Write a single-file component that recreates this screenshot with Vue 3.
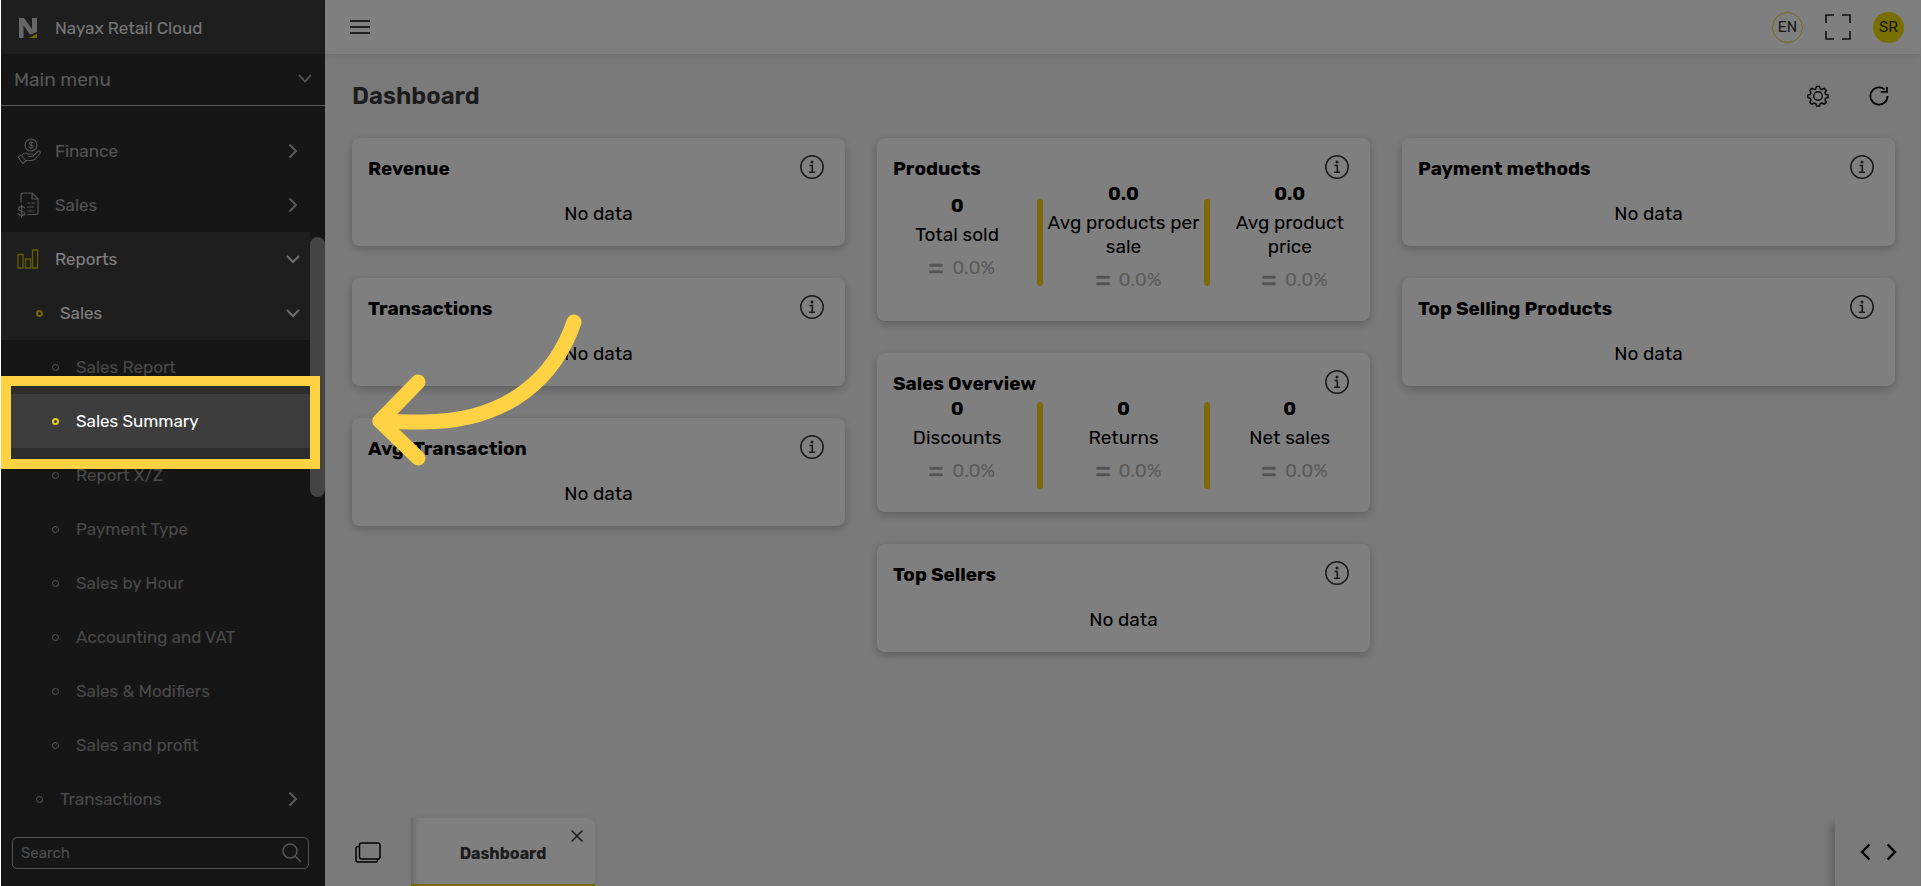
<script setup>
import { ref } from 'vue'

const search = ref('')

const menu = [
  { label: 'Finance', level: 0, icon: 'finance', arrow: 'right' },
  { label: 'Sales', level: 0, icon: 'sales', arrow: 'right' },
  { label: 'Reports', level: 0, icon: 'reports', arrow: 'down', active: true },
  { label: 'Sales', level: 1, arrow: 'down', active: true },
  { label: 'Sales Report', level: 2 },
  { label: 'Sales Summary', level: 2, active: true },
  { label: 'Report X/Z', level: 2 },
  { label: 'Payment Type', level: 2 },
  { label: 'Sales by Hour', level: 2 },
  { label: 'Accounting and VAT', level: 2 },
  { label: 'Sales & Modifiers', level: 2 },
  { label: 'Sales and profit', level: 2 },
  { label: 'Transactions', level: 1, arrow: 'right' },
]

const columns = [
  [{ title: 'Revenue' }, { title: 'Transactions' }, { title: 'Avg. Transaction' }],
  [
    {
      title: 'Products',
      stats: [
        { value: '0', label: 'Total sold', change: '0.0%' },
        { value: '0.0', label: 'Avg products per sale', change: '0.0%' },
        { value: '0.0', label: 'Avg product price', change: '0.0%' },
      ],
    },
    {
      title: 'Sales Overview',
      stats: [
        { value: '0', label: 'Discounts', change: '0.0%' },
        { value: '0', label: 'Returns', change: '0.0%' },
        { value: '0', label: 'Net sales', change: '0.0%' },
      ],
    },
    { title: 'Top Sellers' },
  ],
  [{ title: 'Payment methods' }, { title: 'Top Selling Products' }],
]
</script>

<template>
  <div class="app">
    <aside class="sidebar">
      <div class="brand">
        <svg class="logo" width="20" height="22" viewBox="0 0 20 22" aria-hidden="true">
          <path d="M1 1h5l8 11V1h5v14l-7 2.500L5.500 8.500V21H1z" fill="#cfcfcf" />
          <path d="M11 21 19 16.500V21z" fill="#e8c400" />
        </svg>
        <span>Nayax Retail Cloud</span>
      </div>
      <button class="main-menu" type="button">
        <span>Main menu</span>
        <svg width="14" height="12" viewBox="0 0 14 12" aria-hidden="true">
          <path d="M1 1l6 6.500 6-6.500" fill="none" stroke="currentColor" stroke-width="1.800" />
        </svg>
      </button>

      <div class="menu-area">
        <nav class="menu">
          <component
            :is="item.arrow ? 'button' : 'a'"
            v-for="(item, i) in menu"
            :key="i"
            :type="item.arrow ? 'button' : null"
            :href="item.arrow ? null : '#'"
            class="row"
            :class="['level-' + item.level, { active: item.active }]"
          >
            <span class="mark">
              <svg v-if="item.icon === 'finance'" width="24" height="26" viewBox="0 0 24 26" fill="none" stroke="currentColor" stroke-width="1.100" stroke-linejoin="round" stroke-linecap="round">
                <circle cx="14" cy="7" r="6" />
                <path d="M16 5c-.5-1-3.800-1.200-3.800.5 0 2 3.800 1 3.800 3 0 1.700-3.300 1.500-4 .3M14 3v8" />
                <path d="M4.500 17.500c2-2.500 4.500-3 6.500-1.500h4c2 0 2 2.500 0 2.500h-3.500M16.500 17.500l4.500-4c1.500-1 3 .5 2 2l-5.500 6c-1 1-2 1-3.500 1H9.500l-1.500 1M1 19l3-2 5 6-3.200 2.500z" />
              </svg>
              <svg v-else-if="item.icon === 'sales'" width="24" height="26" viewBox="0 0 24 26" fill="none" stroke="currentColor" stroke-width="1.200" stroke-linejoin="round" stroke-linecap="round">
                <path d="M4 10V3.500C4 2 5 1 6.500 1H15l6 6v13c0 1.500-1 2.500-2.500 2.500H11M15 1v6h6" />
                <path d="M11 11h2M15 11h2.500M10.500 15H17M10.500 19H17" />
                <path d="M7.500 16c-.8-2-6-2-6 .8 0 3.200 6.300 1.700 6.300 4.600 0 2.800-5.800 2.600-6.600.2M4.600 13v12.500" />
              </svg>
              <svg v-else-if="item.icon === 'reports'" width="22" height="20" viewBox="0 0 22 20" fill="none" stroke="#cbb900" stroke-width="1.300">
                <path d="M1 5.500h5v13.500H1zM8.500 10h5v9h-5zM15.500 1h5v18h-5z" />
              </svg>
              <i v-else class="bullet"></i>
            </span>
            <span class="row-label">{{ item.label }}</span>
            <svg v-if="item.arrow" class="chevron" width="14" height="14" viewBox="0 0 14 14" fill="none" stroke="currentColor" stroke-width="2">
              <path v-if="item.arrow === 'right'" d="M3.500 .5l6.500 6.500-6.500 6.500" />
              <path v-else d="M1 4l6 6 6-6" />
            </svg>
          </component>
        </nav>
        <div class="scroll-track"><div class="scroll-thumb"></div></div>
      </div>

      <div class="search">
        <input v-model="search" type="text" placeholder="Search" aria-label="Search" />
        <svg width="20" height="20" viewBox="0 0 20 20" fill="none" stroke="#a8a8a8" stroke-width="1.600" aria-hidden="true">
          <circle cx="8" cy="8" r="7" />
          <path d="M13 13l6 6" />
        </svg>
      </div>
    </aside>

    <div class="content">
      <header class="topbar">
        <button class="icon-btn" type="button" aria-label="Toggle menu">
          <svg width="20" height="16" viewBox="0 0 20 16" stroke="#000" stroke-width="1.600">
            <path d="M0 2h20M0 8h20M0 14h20" />
          </svg>
        </button>
        <div class="top-actions">
          <button class="round lang" type="button">EN</button>
          <button class="icon-btn" type="button" aria-label="Full screen">
            <svg width="26" height="26" viewBox="0 0 26 26" fill="none" stroke="#222" stroke-width="1.600">
              <path d="M1 9V1h8M17 1h8v8M25 17v8h-8M9 25H1v-8" />
            </svg>
          </button>
          <button class="round user" type="button">SR</button>
        </div>
      </header>

      <main class="page">
        <div class="page-head">
          <h1>Dashboard</h1>
          <div class="page-actions">
            <button class="icon-btn" type="button" aria-label="Settings">
              <svg width="22" height="22" viewBox="0 0 24 24" fill="none" stroke="#111" stroke-width="1.600" stroke-linejoin="round">
                <circle cx="12" cy="12" r="4.700" />
                <path d="M10.300 1.500h3.400l.6 2.700 2 .8 2.400-1.500 2.400 2.400L19.600 8.300l.8 2 2.600.5v3l-2.600.6-.8 2 1.500 2.300-2.400 2.400-2.400-1.500-2 .8-.6 2.600h-3.400l-.6-2.600-2-.8-2.400 1.500-2.400-2.400 1.500-2.300-.8-2L1 13.800v-3l2.600-.5.8-2L2.900 5.900l2.400-2.400L7.700 5l2-.8z" />
              </svg>
            </button>
            <button class="icon-btn" type="button" aria-label="Refresh">
              <svg width="20" height="20" viewBox="0 0 22 22" fill="none" stroke="#000" stroke-width="1.900">
                <path d="M20.500 11a9.500 9.500 0 1 1-3.400-7.300" />
                <path d="M13 6.500h6.800V1" />
              </svg>
            </button>
          </div>
        </div>

        <div class="board">
          <div v-for="(cards, c) in columns" :key="c" class="column">
            <section v-for="card in cards" :key="card.title" class="card">
              <div class="card-head">
                <h2>{{ card.title }}</h2>
                <button class="icon-btn" type="button" :aria-label="'About ' + card.title">
                  <svg width="24" height="24" viewBox="0 0 24 24" fill="none" stroke="#333">
                    <circle cx="12" cy="12" r="11.200" stroke-width="1.500" />
                    <circle cx="12" cy="7" r="1.500" fill="#333" stroke="none" />
                    <path d="M9.500 10.500h2.800v6.500M9 17.200h6" stroke-width="1.600" />
                  </svg>
                </button>
              </div>
              <div v-if="card.stats" class="stats">
                <template v-for="(s, i) in card.stats" :key="s.label">
                  <span v-if="i" class="divider"></span>
                  <div class="stat">
                    <strong>{{ s.value }}</strong>
                    <span class="stat-label">{{ s.label }}</span>
                    <span class="change">
                      <svg width="14" height="11" viewBox="0 0 14 11" stroke="#ababab" stroke-width="3" stroke-linecap="round">
                        <path d="M1.500 2.200h11M1.500 8.800h11" />
                      </svg>
                      {{ s.change }}
                    </span>
                  </div>
                </template>
              </div>
              <p v-else class="empty">No data</p>
            </section>
          </div>
        </div>
      </main>

      <footer class="tabbar">
        <button class="windows" type="button" aria-label="Open windows">
          <svg width="26" height="22" viewBox="0 0 26 22" fill="none" stroke="#000" stroke-width="1.500">
            <rect x="4.500" y="1" width="20.500" height="16" rx="2" />
            <path d="M4.500 4.500H3a2 2 0 0 0-2 2V18a2 2 0 0 0 2 2h17.500a2 2 0 0 0 2-2v-1" />
          </svg>
        </button>
        <div class="tab">
          <a class="tab-label" href="#">Dashboard</a>
          <button class="tab-close" type="button" aria-label="Close tab">
            <svg width="12" height="12" viewBox="0 0 12 12" stroke="#333" stroke-width="1.500">
              <path d="M.5.5l11 11M11.500.5l-11 11" />
            </svg>
          </button>
        </div>
        <div class="pager">
          <button class="icon-btn" type="button" aria-label="Previous tab">
            <svg width="12" height="18" viewBox="0 0 12 18" fill="none" stroke="#000" stroke-width="2.400">
              <path d="M10.500 1.500L3 9l7.500 7.500" />
            </svg>
          </button>
          <button class="icon-btn" type="button" aria-label="Next tab">
            <svg width="12" height="18" viewBox="0 0 12 18" fill="none" stroke="#000" stroke-width="2.400">
              <path d="M1.500 1.500L9 9l-7.500 7.500" />
            </svg>
          </button>
        </div>
      </footer>
    </div>

    <div class="spotlight"></div>
    <svg class="pointer" width="212" height="156" viewBox="0 0 212 156" fill="none" stroke="#ffd243" stroke-width="15" stroke-linecap="round" stroke-linejoin="round" aria-hidden="true">
      <path d="M204 12C186 65 140 112 53 112C38 112 25 112 10 111" />
      <path d="M48 72L10 111L48 148" />
    </svg>
  </div>
</template>

<style>
body {
  margin: 0;
  background: #fff;
}
</style>

<style scoped>
.app {
  position: relative;
  display: flex;
  height: 100vh;
  margin: 0 1px;
  overflow: hidden;
  background: #f5f5f5;
  color: #000;
  font: 400 19px/24px Rubik, Inter, "Liberation Sans", sans-serif;
}
.app * {
  box-sizing: border-box;
}
button,
input {
  margin: 0;
  padding: 0;
  border: 0;
  background: none;
  color: inherit;
  font: inherit;
}
a {
  color: inherit;
  text-decoration: none;
}
svg {
  display: block;
  flex: none;
}

.sidebar {
  display: flex;
  flex: none;
  flex-direction: column;
  width: 324px;
  background: #2d2d2d;
}
.brand {
  display: flex;
  flex: none;
  align-items: center;
  gap: 17px;
  height: 54px;
  padding: 2px 0 0 17px;
  background: #3d3d3d;
  color: #ebebeb;
  font-size: 17px;
}
.main-menu {
  display: flex;
  flex: none;
  align-items: center;
  justify-content: space-between;
  height: 52px;
  padding: 0 13px;
  border-bottom: 1px solid #b4b4b4;
  color: #b0b0b0;
}
.menu-area {
  display: flex;
  flex: 1;
  min-height: 0;
}
.menu {
  flex: 1;
  padding-top: 18px;
  overflow: hidden;
}
.row {
  display: flex;
  align-items: center;
  width: 100%;
  height: 54px;
  padding: 0 10px 0 16px;
  color: #a8a8a8;
  font-size: 17px;
  text-align: left;
}
.mark {
  display: flex;
  flex: none;
  width: 38px;
}
.level-1 .mark {
  width: 43px;
  padding-left: 19px;
}
.level-2 .mark {
  width: 59px;
  padding-left: 35px;
}
.level-2,
.level-1 {
  color: #939393;
}
.bullet {
  width: 7px;
  height: 7px;
  border: 1px solid #b0b0b0;
  border-radius: 50%;
}
.row-label {
  flex: 1;
}
.chevron {
  color: #b4b4b4;
}
.row.active {
  background: #3d3d3d;
  color: #fff;
}
.active .chevron {
  color: #dedede;
}
.active .bullet {
  border: 2px solid #e0cd1c;
}
.scroll-track {
  width: 15px;
  padding-top: 131px;
}
.scroll-thumb {
  height: 260px;
  border-radius: 8px;
  background: #888;
}
.search {
  display: flex;
  flex: none;
  align-items: center;
  height: 32px;
  margin: 11px 16px 17px 11px;
  padding: 0 6px 0 8px;
  border: 1px solid #a8a8a8;
  border-radius: 5px;
}
.search input {
  flex: 1;
  min-width: 0;
  outline: 0;
  font-size: 15px;
}
.search input::placeholder {
  color: #9c9c9c;
}

.content {
  display: flex;
  flex: 1;
  flex-direction: column;
  min-width: 0;
}
.topbar {
  display: flex;
  flex: none;
  align-items: center;
  justify-content: space-between;
  height: 54px;
  padding: 0 17px 0 25px;
  background: #fff;
  box-shadow: 0 1px 8px rgba(0, 0, 0, 0.12);
}
.top-actions {
  display: flex;
  align-items: center;
  gap: 22px;
}
.round {
  width: 31px;
  height: 31px;
  border-radius: 50%;
  color: #333;
  font-size: 15px;
}
.lang {
  border: 1px solid #e8d81a;
}
.user {
  background: #f0de00;
}
.page {
  flex: 1;
  padding: 27px 26px 0 27px;
}
.page-head {
  display: flex;
  align-items: center;
  justify-content: space-between;
  height: 30px;
}
h1 {
  margin: 0;
  color: #383838;
  font-size: 24px;
  font-weight: 600;
  line-height: 30px;
}
.page-actions {
  display: flex;
  align-items: center;
  gap: 40px;
  padding-right: 6px;
}
.board {
  display: grid;
  grid-template-columns: repeat(3, minmax(0, 1fr));
  gap: 32px;
  margin-top: 27px;
}
.column {
  display: flex;
  flex-direction: column;
  gap: 32px;
}
.card {
  border-radius: 8px;
  background: #fff;
  box-shadow: 0 3px 10px rgba(0, 0, 0, 0.24);
}
.card-head {
  display: flex;
  align-items: flex-start;
  justify-content: space-between;
  height: 42px;
  padding: 17px 21px 0 16px;
}
h2 {
  margin: 0;
  padding-top: 2px;
  font-size: 19px;
  font-weight: 700;
  line-height: 24px;
}
.empty {
  margin: 0;
  padding: 22px 0 20px;
  text-align: center;
}
.stats {
  display: flex;
  align-items: center;
  padding-bottom: 17px;
}
.stat {
  display: flex;
  flex: 1 0 0;
  flex-direction: column;
  align-items: center;
  min-width: 0;
  padding: 2px 3px 12px;
  text-align: center;
}
.stat strong {
  margin-bottom: 5px;
  font-weight: 700;
}
.divider {
  width: 6px;
  height: 87px;
  border-radius: 3px;
  background: #ffd016;
}
.change {
  display: flex;
  align-items: center;
  gap: 9px;
  margin-top: 9px;
  padding-left: 10px;
  color: #b4b4b4;
}
.tabbar {
  display: flex;
  flex: none;
  height: 68px;
}
.windows {
  display: flex;
  align-items: center;
  width: 86px;
  padding: 2px 0 0 30px;
}
.tab {
  position: relative;
  display: flex;
  align-items: center;
  justify-content: center;
  width: 184px;
  padding-top: 6px;
  border-bottom: 2px solid #e6d400;
  border-radius: 0 8px 0 0;
  background: #fff;
  box-shadow: inset 10px 0 8px -8px rgba(0, 0, 0, 0.25), 0 0 6px rgba(0, 0, 0, 0.08);
}
.tab-label {
  color: #383838;
  font-size: 16px;
  font-weight: 700;
}
.tab-close {
  position: absolute;
  top: 12px;
  right: 12px;
}
.pager {
  display: flex;
  align-items: center;
  gap: 15px;
  margin-left: auto;
  padding: 0 23px 0 24px;
  box-shadow: -5px 6px 8px rgba(0, 0, 0, 0.2);
}

.spotlight {
  position: absolute;
  top: 376px;
  left: 0;
  width: 319px;
  height: 93px;
  border: 10px solid #ffd243;
  box-shadow: 0 0 0 9999px rgba(0, 0, 0, 0.5);
  pointer-events: none;
}
.pointer {
  position: absolute;
  top: 310px;
  left: 369px;
  pointer-events: none;
}
</style>
